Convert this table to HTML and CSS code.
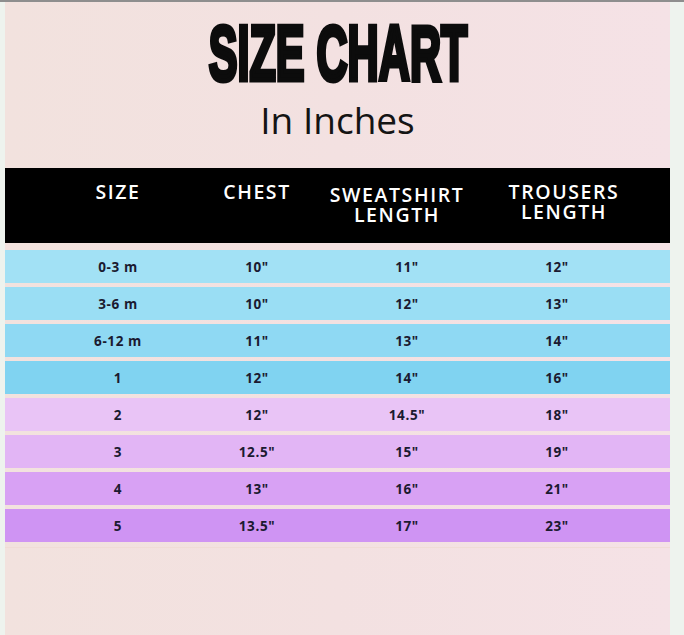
FILE: index.html
```html
<!DOCTYPE html>
<html lang="en">
<head>
<meta charset="utf-8">
<title>Size Chart</title>
<link rel="stylesheet" href="styles.css">
</head>
<body>
<div class="page">
  <div class="titles">
    <h1 class="title"><span class="title-text">SIZE CHART</span></h1>
    <p class="subtitle">In Inches</p>
  </div>
  <div class="head">
    <div class="hc">SIZE</div>
    <div class="hc">CHEST</div>
    <div class="hc hc-low"><span class="wrap">SWEATSHIRT LENGTH</span></div>
    <div class="hc"><span class="wrap">TROUSERS LENGTH</span></div>
  </div>
  <div class="rows">
    <div class="row r1"><span>0-3 m</span><span>10"</span><span>11"</span><span>12"</span></div>
    <div class="row r2"><span>3-6 m</span><span>10"</span><span>12"</span><span>13"</span></div>
    <div class="row r3"><span>6-12 m</span><span>11"</span><span>13"</span><span>14"</span></div>
    <div class="row r4"><span>1</span><span>12"</span><span>14"</span><span>16"</span></div>
    <div class="row r5"><span>2</span><span>12"</span><span>14.5"</span><span>18"</span></div>
    <div class="row r6"><span>3</span><span>12.5"</span><span>15"</span><span>19"</span></div>
    <div class="row r7"><span>4</span><span>13"</span><span>16"</span><span>21"</span></div>
    <div class="row r8"><span>5</span><span>13.5"</span><span>17"</span><span>23"</span></div>
  </div>
  <div class="foot"></div>
</div>
</body>
</html>
```

FILE: styles.css
```css
html, body {
  margin: 0;
  padding: 0;
}
body {
  background: #eef3ee;
  border-top: 2px solid #8e8e8e;
  height: 633px;
  overflow: hidden;
}
.page {
  margin-left: 5px;
  width: 665px;
  height: 633px;
  background: linear-gradient(90deg, #f2e2de 0%, #f3e1e1 50%, #f5e2e6 100%);
}
.titles {
  padding-top: 13px;
  text-align: center;
}
.title {
  margin: 0;
  font-family: "Liberation Sans", Arial, sans-serif;
  font-weight: 700;
  font-size: 77px;
  line-height: 76px;
  color: #0c0c0c;
}
.title-text {
  display: inline-block;
  -webkit-text-stroke: 5px #0c0c0c;
  transform: scaleX(0.56);
  transform-origin: center;
}
.subtitle {
  margin: 10px 0 0;
  font-family: "Open Sans", sans-serif;
  font-weight: 400;
  font-size: 37px;
  line-height: 38px;
  color: #141414;
}
.head {
  margin-top: 29px;
  height: 75px;
  box-sizing: border-box;
  background: #000;
  padding: 14px 0 0 43px;
  display: grid;
  grid-template-columns: 140px 138px 142px 192px;
  align-items: start;
}
.hc {
  text-align: center;
  font-family: "Open Sans", sans-serif;
  font-weight: 600;
  font-size: 19.5px;
  line-height: 20px;
  letter-spacing: 1.6px;
  color: #fff;
}
.hc-low {
  margin-top: 3px;
}
.wrap {
  display: block;
  width: min-content;
  margin: 0 auto;
}
.rows {
  margin-top: 7px;
  display: flex;
  flex-direction: column;
  gap: 4px;
}
.row {
  height: 33px;
  padding-left: 43px;
  display: grid;
  grid-template-columns: 140px 138px 162px 138px;
  align-items: center;
  font-family: "Open Sans", sans-serif;
  font-weight: 700;
  font-size: 13.5px;
  letter-spacing: 0.6px;
  color: #1b1a30;
}
.row span {
  text-align: center;
}
.r1 { background: #a2e1f5; }
.r2 { background: #9adef4; }
.r3 { background: #8fd9f3; }
.r4 { background: #80d3f1; }
.r5 { background: #e9c4f6; }
.r6 { background: #e2b5f5; }
.r7 { background: #d8a1f4; }
.r8 { background: #cf94f3; }
.foot {
  margin-top: 5px;
  border-top: 1px solid #f0dcd6;
}
```
